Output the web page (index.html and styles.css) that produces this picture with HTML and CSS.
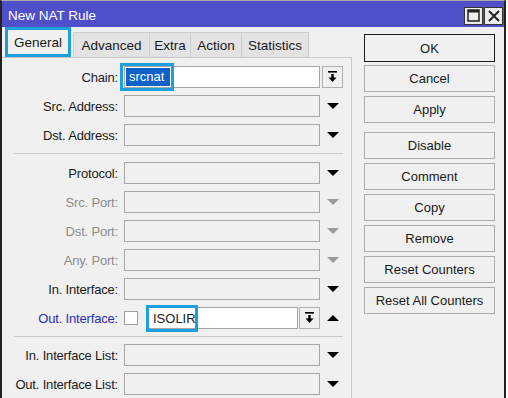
FILE: index.html
```html
<!DOCTYPE html>
<html>
<head>
	<meta charset="utf-8">
	<title>New NAT Rule</title>
	<link rel="stylesheet" href="styles.css">
</head>
<body>
	<div class="window">
		<div class="titlebar">
			<span class="title">New NAT Rule</span>
			<div class="winbtns">
				<span class="wb"><svg width="13" height="13" viewBox="0 0 13 13"><path d="M1 1H12V12H1Z" fill="none" stroke="#222" stroke-width="1.5"/><rect x="1" y="1" width="11" height="2.5" fill="#222"/></svg></span>
				<span class="wb"><svg width="12" height="12" viewBox="0 0 12 12"><path d="M1 1L11 11M11 1L1 11" stroke="#222" stroke-width="2"/></svg></span>
			</div>
		</div>

		<div class="client">
			<div class="left">
				<div class="tabs">
					<div class="tab active">General</div>
					<div class="tab tab_adv">Advanced</div>
					<div class="tab tab_extra">Extra</div>
					<div class="tab tab_action">Action</div>
					<div class="tab tab_stats">Statistics</div>
				</div>

				<div class="panel">
					<div class="row">
						<span class="label">Chain:</span>
						<div class="field white">
							<span class="sel">srcnat</span>
							<span class="mark mark_chain"></span>
						</div>
						<span class="dd dd_trail"><svg width="11" height="12" viewBox="0 0 11 12"><rect x="1" y="0" width="9" height="1.6"/><rect x="4.3" y="3" width="2.4" height="4"/><path d="M1.5 6.5H9.5L5.5 11Z"/></svg></span>
					</div>
					<div class="row">
						<span class="label">Src. Address:</span>
						<div class="field"></div>
						<span class="trail"><svg width="12" height="6" viewBox="0 0 12 6"><path d="M0 0H12L6 6Z"/></svg></span>
					</div>
					<div class="row">
						<span class="label">Dst. Address:</span>
						<div class="field"></div>
						<span class="trail"><svg width="12" height="6" viewBox="0 0 12 6"><path d="M0 0H12L6 6Z"/></svg></span>
					</div>

					<div class="sep"></div>

					<div class="row">
						<span class="label">Protocol:</span>
						<div class="field"></div>
						<span class="trail"><svg width="12" height="6" viewBox="0 0 12 6"><path d="M0 0H12L6 6Z"/></svg></span>
					</div>
					<div class="row">
						<span class="label off">Src. Port:</span>
						<div class="field"></div>
						<span class="trail off"><svg width="12" height="6" viewBox="0 0 12 6"><path d="M0 0H12L6 6Z"/></svg></span>
					</div>
					<div class="row">
						<span class="label off">Dst. Port:</span>
						<div class="field"></div>
						<span class="trail off"><svg width="12" height="6" viewBox="0 0 12 6"><path d="M0 0H12L6 6Z"/></svg></span>
					</div>
					<div class="row">
						<span class="label off">Any. Port:</span>
						<div class="field"></div>
						<span class="trail off"><svg width="12" height="6" viewBox="0 0 12 6"><path d="M0 0H12L6 6Z"/></svg></span>
					</div>
					<div class="row">
						<span class="label">In. Interface:</span>
						<div class="field"></div>
						<span class="trail"><svg width="12" height="6" viewBox="0 0 12 6"><path d="M0 0H12L6 6Z"/></svg></span>
					</div>
					<div class="row">
						<span class="label blue">Out. Interface:</span>
						<span class="check"></span>
						<div class="field white short">
							<span class="val">ISOLIR</span>
							<span class="mark mark_iface"></span>
						</div>
						<span class="dd dd_inline"><svg width="11" height="12" viewBox="0 0 11 12"><rect x="1" y="0" width="9" height="1.6"/><rect x="4.3" y="3" width="2.4" height="4"/><path d="M1.5 6.5H9.5L5.5 11Z"/></svg></span>
						<span class="trail"><svg width="12" height="6" viewBox="0 0 12 6"><path d="M0 6H12L6 0Z"/></svg></span>
					</div>

					<div class="sep sep2"></div>

					<div class="row">
						<span class="label">In. Interface List:</span>
						<div class="field"></div>
						<span class="trail"><svg width="12" height="6" viewBox="0 0 12 6"><path d="M0 0H12L6 6Z"/></svg></span>
					</div>
					<div class="row">
						<span class="label">Out. Interface List:</span>
						<div class="field"></div>
						<span class="trail"><svg width="12" height="6" viewBox="0 0 12 6"><path d="M0 0H12L6 6Z"/></svg></span>
					</div>
				</div>
			</div>

			<div class="actions">
				<div class="btn default">OK</div>
				<div class="btn">Cancel</div>
				<div class="btn">Apply</div>
				<div class="btn gap">Disable</div>
				<div class="btn">Comment</div>
				<div class="btn">Copy</div>
				<div class="btn">Remove</div>
				<div class="btn">Reset Counters</div>
				<div class="btn">Reset All Counters</div>
			</div>
		</div>
	</div>
</body>
</html>
```

FILE: styles.css
```css
body
{
	margin: 0;
	background: #ffffff;
	font-family: "Liberation Sans", Arial, sans-serif;
	font-size: 13px;
	color: #1a1a1a;
}

.window
{
	width: 502px;
	height: 397px;
	border-top: 1px solid #a9a9a9;
	border-left: 2px solid #222;
	border-right: 2px solid #222;
	background: #f0f0f0;
}

.titlebar
{
	height: 26px;
	box-sizing: border-box;
	padding: 3px 1px 0 6px;
	background: #4f4fca;
	display: flex;
	align-items: center;
	justify-content: space-between;
}

.title
{
	color: #fff;
	font-size: 13.5px;
}

.winbtns
{
	display: flex;
	gap: 1px;
}

.wb
{
	width: 17px;
	height: 16px;
	border: 1px solid #333;
	background: #ececec;
	display: flex;
	align-items: center;
	justify-content: center;
}

.client
{
	display: flex;
}

.left
{
	width: 350px;
}

/* tabs */
.tabs
{
	height: 30px;
	padding-left: 3px;
	display: flex;
	align-items: flex-end;
}

.tab
{
	height: 25px;
	box-sizing: border-box;
	background: #e3e3e3;
	border: 1px solid #cdcdcd;
	border-bottom: none;
	display: flex;
	align-items: center;
	justify-content: center;
	font-size: 13.5px;
}

.tab + .tab
{
	margin-left: -1px;
}

.tab.active
{
	width: 66px;
	height: 30px;
	margin-right: 3px;
	background: #f0f0f0;
	border: none;
	outline: 3px solid #1ba0dc;
	outline-offset: -3px;
}

.tab_adv
{
	width: 77px;
}

.tab_extra
{
	width: 42px;
}

.tab_action
{
	width: 52px;
}

.tab_stats
{
	width: 68px;
}

/* form panel */
.panel
{
	height: 340px;
	padding-top: 8px;
	border-top: 1px solid #c8c8c8;
	border-right: 1px solid #c8c8c8;
}

.row
{
	height: 22px;
	margin-bottom: 7px;
	display: flex;
	align-items: center;
}

.label
{
	width: 116px;
	margin-right: 6px;
	text-align: right;
	white-space: nowrap;
	letter-spacing: -0.18px;
}

.label.off
{
	color: #8c8c8c;
}

.label.blue
{
	color: #2e2eb0;
}

.field
{
	position: relative;
	width: 196px;
	height: 22px;
	box-sizing: border-box;
	border: 1px solid #a6a6a6;
	background: #f0f0f0;
	display: flex;
	align-items: center;
}

.field.white
{
	background: #fff;
}

.field.short
{
	width: 150px;
}

.sel
{
	margin-left: 1px;
	height: 18px;
	line-height: 18px;
	padding: 0 6px 0 3px;
	background: #0f62c8;
	color: #fff;
}

.val
{
	padding-left: 4px;
}

.mark
{
	position: absolute;
	box-sizing: border-box;
	border: 3px solid #1ba0dc;
}

.mark_chain
{
	left: -5px;
	top: -4px;
	width: 54px;
	height: 28px;
}

.mark_iface
{
	left: -3px;
	top: -3px;
	width: 52px;
	height: 27px;
}

.trail
{
	width: 21px;
	height: 22px;
	margin-left: 2px;
	display: flex;
	align-items: center;
	justify-content: center;
	fill: #000;
}

.trail.off
{
	fill: #9a9a9a;
}

.dd
{
	width: 21px;
	height: 22px;
	box-sizing: border-box;
	border: 1px solid #b0b0b0;
	background: #f0f0f0;
	display: flex;
	align-items: center;
	justify-content: center;
	fill: #000;
}

.dd_trail
{
	margin-left: 2px;
}

.dd_inline
{
	margin-left: 1px;
}

.check
{
	width: 14px;
	height: 14px;
	box-sizing: border-box;
	border: 1px solid #a0a0a0;
	background: #fff;
	margin-right: 10px;
}

.sep
{
	height: 1px;
	background: #c8c8c8;
	margin: 2px 8px 8px 12px;
}

.sep2
{
	margin-top: 3px;
	margin-bottom: 7px;
}

/* buttons on the right */
.actions
{
	width: 131px;
	margin-left: 12px;
	padding-top: 7px;
	display: flex;
	flex-direction: column;
}

.btn
{
	height: 27px;
	box-sizing: border-box;
	margin-bottom: 4px;
	border: 1px solid #adadad;
	background: #f0f0f0;
	display: flex;
	align-items: center;
	justify-content: center;
}

.btn.default
{
	height: 28px;
	margin-bottom: 3px;
	border-color: #1a1a1a;
}

.btn.gap
{
	margin-top: 5px;
}
```
